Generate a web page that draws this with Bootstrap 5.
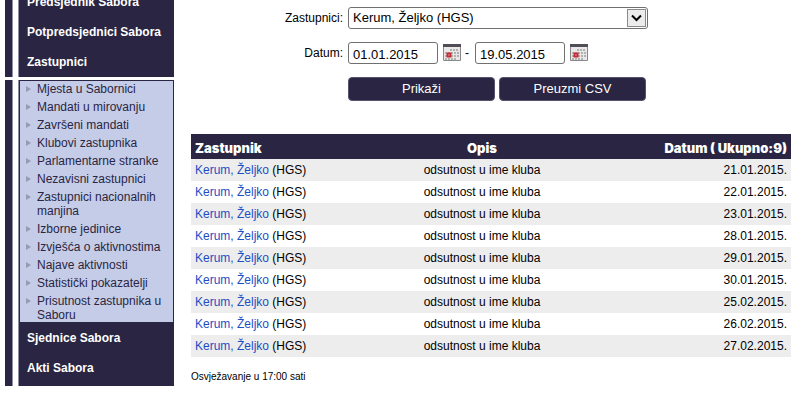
<!DOCTYPE html>
<html lang="hr">
<head>
<meta charset="utf-8">
<meta name="viewport" content="width=device-width, initial-scale=1">
<title>Prisutnost zastupnika u Saboru</title>
<link href="https://cdn.jsdelivr.net/npm/bootstrap@5.3.0/dist/css/bootstrap.min.css" rel="stylesheet">
<style>
:root { --navy: #292542; }
body { font-family: "Liberation Sans", Arial, sans-serif; font-size: 12px; line-height: 14px; color: #000; background: #fff; overflow-x: hidden; }
a { text-decoration: none; }
.side { width: 169px; margin-left: 5px; }
.side-part { gap: 5px; }
.side-part + .side-part { margin-top: 3px; }
.first-part { margin-top: -13px; }
.rail { width: 8px; background: var(--navy); border-right: 1px solid #8f8da3; }
.panel { background: var(--navy); border-left: 1px solid #8f8da3; padding-bottom: 3px; }
.first-part .panel { padding-bottom: 0; }
.main-link { color: #fff; font-weight: bold; line-height: 30px; padding-left: 8px; white-space: nowrap; }
.main-link:hover { color: #c5cce8; }
.submenu { background: #c5cce8; border: 1px solid var(--navy); padding: 1px 8px 0 17px; gap: 4px; }
.submenu a { color: #292542; }
.submenu li { position: relative; }
.submenu li::before { content: ""; position: absolute; left: -11px; top: 4px; border: solid transparent; border-width: 3px 0 3px 5px; border-left-color: #959bb0; }
.content-area { padding: 7px 14px 0 17px; }
.filters { grid-template-columns: 152px minmax(0, 300px); column-gap: 5px; row-gap: 13px; }
.field { height: 22px; border: 1px solid #707070; border-radius: 3px; background: #fff; color: #000; font-size: 13px; line-height: 20px; padding: 0 4px; }
.date-field { width: 90px; padding-top: 2px; }
select.field { appearance: none; }
.arrow { position: absolute; right: 2px; top: 2px; pointer-events: none; }
.cal { width: 18px; height: 18px; margin-left: 5px; }
.dash { width: 14px; padding-left: 4px; }
.action { flex: 0 1 147px; height: 24px; font-size: 13px; line-height: 20px; color: #fff; background: var(--navy); border: 1px solid #55526b; border-radius: 4px; padding: 0; }
.action:hover { background: #3b3660; color: #fff; }
.records { margin-top: 33px; table-layout: fixed; }
.col-member { width: 33%; }
.col-note { width: 31%; }
.records th { background: var(--navy); color: #fff; font-family: Inter, "Liberation Sans", sans-serif; font-size: 13px; font-weight: 900; height: 25px; padding: 2px 4px 0; }
.records td { height: 22px; padding: 0 4px; }
.records tbody tr:nth-child(odd) { background: #ededed; }
.records a { color: #1c4fc4; }
.refresh { font-size: 10px; margin-top: 13px; }
</style>
</head>
<body>
<div class="d-flex align-items-start">
  <nav class="side flex-shrink-0" aria-label="Izbornik">
    <div class="side-part first-part d-flex">
      <div class="rail flex-shrink-0"></div>
      <div class="panel flex-fill d-flex flex-column">
        <a class="main-link" href="#">Predsjednik Sabora</a>
        <a class="main-link" href="#">Potpredsjednici Sabora</a>
        <a class="main-link" href="#">Zastupnici</a>
      </div>
    </div>
    <div class="side-part d-flex">
      <div class="rail flex-shrink-0"></div>
      <div class="panel flex-fill d-flex flex-column">
        <ul class="submenu list-unstyled d-flex flex-column mb-0">
          <li><a href="#">Mjesta u Sabornici</a></li>
          <li><a href="#">Mandati u mirovanju</a></li>
          <li><a href="#">Završeni mandati</a></li>
          <li><a href="#">Klubovi zastupnika</a></li>
          <li><a href="#">Parlamentarne stranke</a></li>
          <li><a href="#">Nezavisni zastupnici</a></li>
          <li><a href="#">Zastupnici nacionalnih manjina</a></li>
          <li><a href="#">Izborne jedinice</a></li>
          <li><a href="#">Izvješća o aktivnostima</a></li>
          <li><a href="#">Najave aktivnosti</a></li>
          <li><a href="#">Statistički pokazatelji</a></li>
          <li><a href="#">Prisutnost zastupnika u Saboru</a></li>
        </ul>
        <a class="main-link" href="#">Sjednice Sabora</a>
        <a class="main-link" href="#">Akti Sabora</a>
      </div>
    </div>
  </nav>
  <main class="content-area flex-fill">
    <form class="filters d-grid align-items-center">
      <label class="text-end" for="member">Zastupnici:</label>
      <div class="position-relative">
        <select class="field w-100 d-block" id="member"><option>Kerum, Željko (HGS)</option></select>
        <svg class="arrow" width="19" height="18" viewBox="0 0 19 18" aria-hidden="true"><rect x=".5" y=".5" width="18" height="17" fill="#ececec" stroke="#8a8a8a"/><path d="M5 6.5l4.5 4.5L14 6.5" fill="none" stroke="#000" stroke-width="2"/></svg>
      </div>
      <label class="text-end" for="from">Datum:</label>
      <div class="d-flex align-items-center">
        <input class="field date-field" id="from" type="text" value="01.01.2015">
        <button class="cal btn p-0 border-0 d-flex" type="button" aria-label="Odaberi početni datum">
          <svg width="18" height="18" viewBox="0 0 18 18"><path fill="#e9e7e7" stroke="#8b8888" d="M.5.5h17v16H.5z"/><path fill="#514d57" d="M0 0h18v3H0z"/><path fill="none" stroke="#b3b0b0" stroke-width="2" stroke-dasharray="2 1" d="M7 6h9M2 9h14M2 12h14M2 15h12"/><path fill="#fff" stroke="#c42b35" stroke-width="2" d="M4.500 9.500h3v3h-3z"/></svg>
        </button>
        <span class="dash">-</span>
        <input class="field date-field" id="to" type="text" value="19.05.2015" aria-label="Završni datum">
        <button class="cal btn p-0 border-0 d-flex" type="button" aria-label="Odaberi završni datum">
          <svg width="18" height="18" viewBox="0 0 18 18"><path fill="#e9e7e7" stroke="#8b8888" d="M.5.5h17v16H.5z"/><path fill="#514d57" d="M0 0h18v3H0z"/><path fill="none" stroke="#b3b0b0" stroke-width="2" stroke-dasharray="2 1" d="M7 6h9M2 9h14M2 12h14M2 15h12"/><path fill="#fff" stroke="#c42b35" stroke-width="2" d="M4.500 9.500h3v3h-3z"/></svg>
        </button>
      </div>
      <span></span>
      <div class="d-flex gap-1">
        <button class="action btn" type="button">Prikaži</button>
        <button class="action btn" type="button">Preuzmi CSV</button>
      </div>
    </form>
    <table class="records w-100">
      <thead><tr><th class="col-member">Zastupnik</th><th class="col-note text-center">Opis</th><th class="text-end">Datum ( Ukupno:9)</th></tr></thead>
      <tbody>
        <tr><td><a href="#">Kerum, Željko</a> (HGS)</td><td class="text-center">odsutnost u ime kluba</td><td class="text-end">21.01.2015.</td></tr>
        <tr><td><a href="#">Kerum, Željko</a> (HGS)</td><td class="text-center">odsutnost u ime kluba</td><td class="text-end">22.01.2015.</td></tr>
        <tr><td><a href="#">Kerum, Željko</a> (HGS)</td><td class="text-center">odsutnost u ime kluba</td><td class="text-end">23.01.2015.</td></tr>
        <tr><td><a href="#">Kerum, Željko</a> (HGS)</td><td class="text-center">odsutnost u ime kluba</td><td class="text-end">28.01.2015.</td></tr>
        <tr><td><a href="#">Kerum, Željko</a> (HGS)</td><td class="text-center">odsutnost u ime kluba</td><td class="text-end">29.01.2015.</td></tr>
        <tr><td><a href="#">Kerum, Željko</a> (HGS)</td><td class="text-center">odsutnost u ime kluba</td><td class="text-end">30.01.2015.</td></tr>
        <tr><td><a href="#">Kerum, Željko</a> (HGS)</td><td class="text-center">odsutnost u ime kluba</td><td class="text-end">25.02.2015.</td></tr>
        <tr><td><a href="#">Kerum, Željko</a> (HGS)</td><td class="text-center">odsutnost u ime kluba</td><td class="text-end">26.02.2015.</td></tr>
        <tr><td><a href="#">Kerum, Željko</a> (HGS)</td><td class="text-center">odsutnost u ime kluba</td><td class="text-end">27.02.2015.</td></tr>
      </tbody>
    </table>
    <p class="refresh mb-0">Osvježavanje u 17:00 sati</p>
  </main>
</div>
<script src="https://cdn.jsdelivr.net/npm/bootstrap@5.3.0/dist/js/bootstrap.bundle.min.js"></script>
</body>
</html>
